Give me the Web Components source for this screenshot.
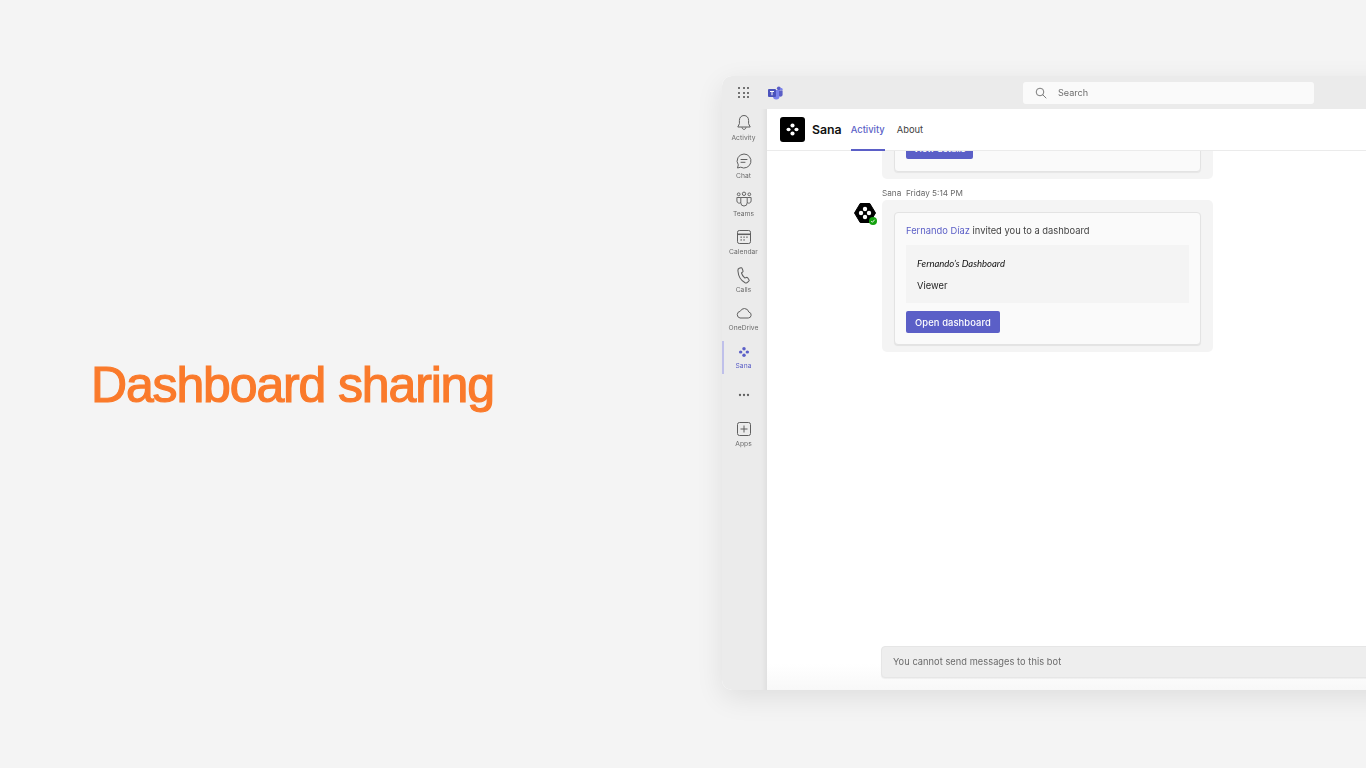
<!DOCTYPE html>
<html lang="en"><head><meta charset="utf-8"><title>Dashboard sharing</title>
<style>
html,body{margin:0;padding:0;height:100%;overflow:hidden;background:#f4f4f4}
</style></head><body>
<promo-page>
  <span slot="title">Dashboard sharing</span>
  <teams-window slot="window">
    <teams-titlebar slot="top"></teams-titlebar>
    <teams-rail slot="rail">
      <rail-item label="Activity" icon="bell"></rail-item>
      <rail-item label="Chat" icon="chat"></rail-item>
      <rail-item label="Teams" icon="teams"></rail-item>
      <rail-item label="Calendar" icon="calendar"></rail-item>
      <rail-item label="Calls" icon="calls"></rail-item>
      <rail-item label="OneDrive" icon="cloud"></rail-item>
      <rail-item label="Sana" icon="sana" active></rail-item>
      <rail-item icon="more"></rail-item>
      <rail-item label="Apps" icon="apps"></rail-item>
    </teams-rail>
    <app-header slot="header"></app-header>
    <clipped-message slot="body">View details</clipped-message>
    <invite-message slot="body"></invite-message>
    <bot-composer slot="composer">You cannot send messages to this bot</bot-composer>
  </teams-window>
</promo-page>
<script>
const SANS='"Inter","Liberation Sans",sans-serif';
const sanaDots=(c,s=24)=>`<svg width="${s}" height="${s}" viewBox="0 0 24 24" fill="${c}" aria-hidden="true"><circle cx="12" cy="7" r="2.6"/><circle cx="12" cy="17" r="2.6"/><ellipse cx="7" cy="12" rx="2.6" ry="2.3"/><ellipse cx="17" cy="12" rx="2.6" ry="2.3"/></svg>`;
const ICONS={
bell:`<svg width="18" height="18" viewBox="0 0 18 18" fill="none" stroke="#5f5f5f" stroke-width="1"><path d="M9 1.5c-3 0-4.6 2.3-4.6 5v3.2L2.8 13h12.4l-1.6-3.3V6.500c0-2.700-1.600-5-4.600-5z" stroke-linejoin="round"/><path d="M7 13.300c.2 1.300 1 2.100 2 2.100s1.800-.8 2-2.100"/></svg>`,
chat:`<svg width="18" height="18" viewBox="0 0 18 18" fill="none" stroke="#5f5f5f" stroke-width="1"><path d="M9 2a7 7 0 1 1-3.300 13.200L2.500 16l.8-3.100A7 7 0 0 1 9 2z" stroke-linejoin="round"/><path d="M6 7.500h6M6 10.300h4" stroke-linecap="round"/></svg>`,
teams:`<svg width="18" height="18" viewBox="0 0 18 18" fill="none" stroke="#5f5f5f" stroke-width=".95"><circle cx="9" cy="3.800" r="1.700"/><circle cx="3.700" cy="4.300" r="1.400"/><circle cx="14.300" cy="4.300" r="1.400"/><path d="M5.800 7.500h6.400v5.300a3.200 3.200 0 0 1-6.400 0z"/><path d="M5.800 7.500H1.900v3.400a2.300 2.300 0 0 0 3.900 1.600M12.200 7.500h3.900v3.400a2.300 2.300 0 0 1-3.900 1.600"/></svg>`,
calendar:`<svg width="18" height="18" viewBox="0 0 18 18" fill="none" stroke="#5f5f5f" stroke-width="1"><rect x="2.500" y="2.500" width="13" height="13" rx="1.800"/><path d="M2.500 6.300h13" stroke-width="1.500"/><g fill="#5f5f5f" stroke="none"><rect x="5.500" y="8.500" width="1.300" height="1.300"/><rect x="8.400" y="8.500" width="1.300" height="1.300"/><rect x="11.300" y="8.500" width="1.300" height="1.300"/><rect x="5.500" y="11.300" width="1.300" height="1.300"/><rect x="8.400" y="11.300" width="1.300" height="1.300"/></g></svg>`,
calls:`<svg width="18" height="18" viewBox="0 0 18 18" fill="none" stroke="#5f5f5f" stroke-width="1.050"><path d="M4.200 2.300 6 1.800c.5-.1.900.1 1.100.6l.9 2.300c.2.400 0 .9-.3 1.200L6.500 7c.5 1.800 1.600 3.600 3.200 4.900l1.700-.5c.4-.1.900 0 1.200.4l1.400 2c.3.400.2.900-.1 1.200l-1.200 1.200c-.7.700-1.700.9-2.600.5C6.500 15 3.400 10.700 2.900 4.800c-.1-1.200.3-2.100 1.300-2.500z" stroke-linejoin="round"/></svg>`,
cloud:`<svg width="18" height="18" viewBox="0 0 18 18" fill="none" stroke="#5f5f5f" stroke-width="1"><path d="M5 14h8.300a3 3 0 0 0 .6-5.900A4.900 4.900 0 0 0 9.500 4.500 4.800 4.800 0 0 0 5.200 7.300 3.400 3.400 0 0 0 5 14z" stroke-linejoin="round"/></svg>`,
sana:sanaDots('#5b5fc7',16),
more:`<svg width="18" height="18" viewBox="0 0 18 18" fill="#5f5f5f"><circle cx="5" cy="9" r="1.150"/><circle cx="9" cy="9" r="1.150"/><circle cx="13" cy="9" r="1.150"/></svg>`,
apps:`<svg width="18" height="18" viewBox="0 0 18 18" fill="none" stroke="#5f5f5f" stroke-width="1"><rect x="2.500" y="2.500" width="13" height="13" rx="2"/><path d="M9 5.500v7M5.500 9h7"/></svg>`
};
function define(name,html,init){
  customElements.define(name,class extends HTMLElement{
    constructor(){super();const r=this.attachShadow({mode:'open'});r.innerHTML=html}
    connectedCallback(){if(init)init(this,this.shadowRoot)}
  });
}
define('promo-page',`<style>
:host{display:flex;width:1366px;height:768px;overflow:hidden;background:#f4f4f4;font-family:${SANS}}
.title{flex:0 0 722px;box-sizing:border-box;padding-left:91px;display:flex;align-items:center;
 padding-top:2px;color:#fa7a2b;font:400 50px/58px "Liberation Sans",Arial,sans-serif;letter-spacing:-1.15px;-webkit-text-stroke:1.2px #fa7a2b;white-space:nowrap}
.win{flex:0 0 auto;padding-top:76px}
</style><div class="title"><slot name="title"></slot></div><div class="win"><slot name="window"></slot></div>`);
define('teams-window',`<style>
:host{display:grid;grid-template-columns:45px 1fr;grid-template-rows:33px 1fr;width:760px;height:614px;
 border-radius:10px 0 0 10px;background:#fff;box-shadow:0 8px 28px rgba(0,0,0,.09);position:relative;filter:blur(.35px)}
.top{grid-column:1/3;background:#ebebeb;border-radius:10px 0 0 0}
.rail{background:#ebebeb;border-radius:0 0 0 10px;box-shadow:inset -6px 0 5px -4px rgba(0,0,0,.06)}
.main{display:flex;flex-direction:column;min-height:0;overflow:hidden;
 background:linear-gradient(#fff calc(100% - 26px),#f8f8f8)}
.body{flex:1;min-height:0;overflow:hidden;display:flex;flex-direction:column}
</style>
<div class="top"><slot name="top"></slot></div>
<div class="rail"><slot name="rail"></slot></div>
<div class="main"><slot name="header"></slot><div class="body"><slot name="body"></slot></div><slot name="composer"></slot></div>`);
define('teams-titlebar',`<style>
:host{display:flex;align-items:center;height:33px;padding-left:16px;box-sizing:border-box}
.grid{display:grid;grid-template-columns:repeat(3,2px);gap:2.500px;width:11px}
.grid i{width:2px;height:2px;border-radius:50%;background:#4a4a4a;display:block}
.logo{margin-left:19px;display:flex}
.search{margin-left:240px;width:291px;height:22px;background:#fafafa;border-radius:3px;display:flex;align-items:center;
 padding-left:12px;box-sizing:border-box;gap:11px;font:400 9.100px/22px ${SANS};color:#6e6e6e}
</style>
<div class="grid"><i></i><i></i><i></i><i></i><i></i><i></i><i></i><i></i><i></i></div>
<div class="logo"><svg width="15" height="14" viewBox="0 0 15 14"><circle cx="10.800" cy="2.300" r="1.900" fill="#5b5fc7"/><circle cx="13.300" cy="3.300" r="1.300" fill="#7b83eb"/><path d="M5 4h6.500v6.200A3.200 3.200 0 0 1 5 10.200z" fill="#7b83eb"/><path d="M11 4.500h3.600v4.300a2 2 0 0 1-3.600 1.100z" fill="#5b5fc7"/><rect x="0" y="3" width="8" height="8" rx="1" fill="#4b53bc"/><path d="M2 5h4v1H4.500v3.300h-1V6H2z" fill="#fff"/></svg></div>
<div class="search"><svg width="12" height="12" viewBox="0 0 12 12" fill="none" stroke="#6e6e6e" stroke-width=".9"><circle cx="5" cy="5" r="3.800"/><path d="M7.800 7.800l3.200 3.200" stroke-linecap="round"/></svg><span>Search</span></div>`);
define('teams-rail',`<style>:host{display:flex;flex-direction:column;padding:3px 2px 0 0;height:100%;box-sizing:border-box}</style><slot></slot>`);
define('rail-item',`<style>
:host{display:flex;flex-direction:column;align-items:center;height:38.100px;padding-top:2px;box-sizing:border-box;position:relative;
 font:400 6.700px/9px ${SANS};color:#6a6a6a;letter-spacing:.05px}
:host([active]){color:#5b5fc7}
:host([active]) .bar{display:block}
:host([icon=more]){height:39.500px;padding-top:7px}
.bar{display:none;position:absolute;left:0;top:0;width:1.500px;height:33px;background:#bfc0ea}
.i{height:18px;display:flex;align-items:center}
.l{margin-top:1.800px}
</style><span class="bar"></span><span class="i"></span><span class="l"></span>`,(el,r)=>{
  r.querySelector('.i').innerHTML=ICONS[el.getAttribute('icon')]||'';
  r.querySelector('.l').textContent=el.getAttribute('label')||'';
});
define('app-header',`<style>
:host{display:flex;align-items:stretch;height:42px;padding-left:13px;box-sizing:border-box;border-bottom:1px solid #ebebeb;background:#fff;flex:none;position:relative;z-index:1}
.logo{width:25px;height:25px;align-self:center;background:#000;border-radius:3px;display:flex;align-items:center;justify-content:center}
.name{align-self:center;margin-left:7px;font:600 12.300px/16px ${SANS};color:#111}
.tab{align-self:stretch;display:flex;align-items:center;padding-top:2px;font:400 9.400px/12px ${SANS};color:#424242;box-sizing:border-box;border-bottom:2px solid transparent;margin-bottom:-1px}
.a{margin-left:9px;color:#5b5fc7;font-weight:500;border-color:#5b5fc7}
.b{margin-left:12px}
</style><div class="logo">${sanaDots('#fff',19)}</div><div class="name">Sana</div><div class="tab a">Activity</div><div class="tab b">About</div>`);
define('clipped-message',`<style>
:host{display:flex;flex-direction:column;justify-content:flex-end;flex:none;height:28px;width:331px;margin-left:115px;overflow:hidden;box-sizing:border-box;padding:0 12px 7px;background:#f4f4f4;border-radius:0 0 5px 5px}
.card{flex:none;background:#fafafa;border:1px solid #e3e3e3;border-radius:4px;box-shadow:0 1px 1px rgba(0,0,0,.06);padding:6px 11px 12px}
.btn{display:block;width:max-content;background:#5b5fc7;color:#fff;font:500 9.100px/12px ${SANS};padding:6px 7px 4px;border-radius:2px}
</style><div class="card"><span class="btn"><slot></slot></span></div>`);
define('invite-message',`<style>
:host{display:grid;grid-template-columns:27px 331px;margin:7px 0 0 88px;font:400 9.350px/13px ${SANS};color:#424242;flex:none}
.meta{grid-column:2;font-size:8.200px;line-height:14px;color:#6a6a6a;white-space:pre;height:14px}
.av{grid-column:1;position:relative;width:22px;height:22px;margin:2px 0 0 -1px}
.bubble{grid-column:2;background:#f4f4f4;border-radius:5px;padding:12px;box-sizing:border-box;height:152px}
.card{background:#fafafa;border:1px solid #e3e3e3;border-radius:4px;box-shadow:0 1px 1px rgba(0,0,0,.07);padding:11px;box-sizing:border-box;height:133px}
.line{height:21px;line-height:13px}
a{color:#5b5fc7;text-decoration:none}
.box{background:#f4f4f4;height:58px;padding:0 11px;box-sizing:border-box;display:flex;flex-direction:column;justify-content:center;gap:9px;color:#242424;margin-bottom:8px}
.box em{font:italic 400 9.500px/13px "Lato",sans-serif;color:#111}
.btn{display:inline-block;background:#5b5fc7;color:#fff;font:500 9.400px/23px ${SANS};height:22px;padding:0 9px;border-radius:2px;letter-spacing:.1px}
.ok{position:absolute;right:-1px;bottom:-1px;width:8px;height:8px;border-radius:50%;background:#13a10e;display:flex;align-items:center;justify-content:center}
</style>
<div class="meta">Sana  Friday 5:14 PM</div>
<div class="av"><svg width="22" height="22" viewBox="0 0 22 22"><path d="M6.200 1.500h9.600L21.500 11l-5.700 9.500H6.200L.5 11z" fill="#000" stroke="#000" stroke-linejoin="round"/><g fill="#fff"><circle cx="11" cy="7" r="2.200"/><circle cx="11" cy="15" r="2.200"/><circle cx="7" cy="11" r="2.200"/><circle cx="15" cy="11" r="2.200"/></g></svg>
<span class="ok"><svg width="6" height="6" viewBox="0 0 6 6" fill="none" stroke="#fff" stroke-width=".9"><path d="M1.200 3.100l1.200 1.200 2.300-2.600"/></svg></span></div>
<div class="bubble"><div class="card">
<div class="line"><a>Fernando Díaz</a> invited you to a dashboard</div>
<div class="box"><em>Fernando’s Dashboard</em><span>Viewer</span></div>
<span class="btn">Open dashboard</span>
</div></div>`);
define('bot-composer',`<style>
:host{display:flex;align-items:center;flex:none;height:32px;margin:0 0 12px 114px;padding-left:11px;box-sizing:border-box;background:#eeeeee;border:1px solid #e6e6e6;border-radius:4px 0 0 4px;box-shadow:0 1px 1px rgba(0,0,0,.05);font:400 9.250px/12px ${SANS};color:#6a6a6a;letter-spacing:.05px}
</style><slot></slot>`);
</script>
</body></html>
